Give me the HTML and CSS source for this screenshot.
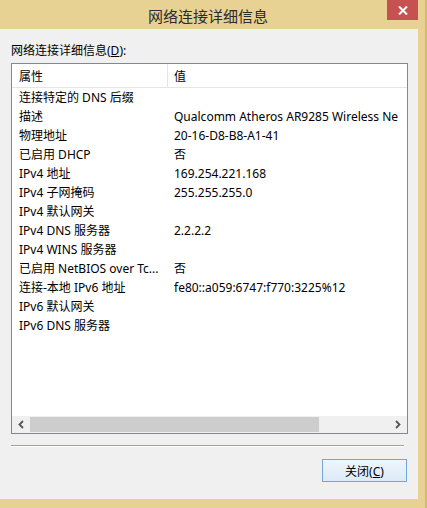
FILE: index.html
```html
<!DOCTYPE html>
<html>
<head>
	<meta charset="UTF-8">
	<title>网络连接详细信息</title>
	<link rel="stylesheet" href="styles.css">
</head>
<body>
	<div class="window">
		<div class="titlebar">
			<span class="title">网络连接详细信息</span>
			<span class="close">
				<svg width="10" height="9" viewBox="0 0 10 9"><path d="M1 0.5 L9 8.5 M9 0.5 L1 8.5" stroke="#fff" stroke-width="2"/></svg>
			</span>
		</div>
		<div class="client">
			<p class="label">网络连接详细信息(<u>D</u>):</p>
			<div class="listbox">
				<div class="header">
					<span class="col1">属性</span>
					<span class="col2">值</span>
				</div>
				<div class="rows">
					<div class="row"><span class="col1">连接特定的 DNS 后缀</span><span class="col2"></span></div>
					<div class="row"><span class="col1">描述</span><span class="col2">Qualcomm Atheros AR9285 Wireless Ne</span></div>
					<div class="row"><span class="col1">物理地址</span><span class="col2">20-16-D8-B8-A1-41</span></div>
					<div class="row"><span class="col1">已启用 DHCP</span><span class="col2">否</span></div>
					<div class="row"><span class="col1">IPv4 地址</span><span class="col2">169.254.221.168</span></div>
					<div class="row"><span class="col1">IPv4 子网掩码</span><span class="col2">255.255.255.0</span></div>
					<div class="row"><span class="col1">IPv4 默认网关</span><span class="col2"></span></div>
					<div class="row"><span class="col1">IPv4 DNS 服务器</span><span class="col2">2.2.2.2</span></div>
					<div class="row"><span class="col1">IPv4 WINS 服务器</span><span class="col2"></span></div>
					<div class="row"><span class="col1">已启用 NetBIOS over Tc...</span><span class="col2">否</span></div>
					<div class="row"><span class="col1">连接-本地 IPv6 地址</span><span class="col2">fe80::a059:6747:f770:3225%12</span></div>
					<div class="row"><span class="col1">IPv6 默认网关</span><span class="col2"></span></div>
					<div class="row"><span class="col1">IPv6 DNS 服务器</span><span class="col2"></span></div>
				</div>
				<div class="hscroll">
					<span class="arrow">
						<svg width="8" height="9" viewBox="0 0 8 9"><path d="M6 1 L2.5 4.5 L6 8" fill="none" stroke="#555" stroke-width="1.8"/></svg>
					</span>
					<span class="track"><span class="thumb"></span></span>
					<span class="arrow">
						<svg width="8" height="9" viewBox="0 0 8 9"><path d="M2 1 L5.5 4.5 L2 8" fill="none" stroke="#555" stroke-width="1.8"/></svg>
					</span>
				</div>
			</div>
			<div class="separator"></div>
			<div class="buttons">
				<button>关闭(<u>C</u>)</button>
			</div>
		</div>
	</div>
</body>
</html>
```

FILE: styles.css
```css
*{margin: 0;padding: 0;box-sizing: border-box;}
body{width: 427px;height: 508px;overflow: hidden;font-family: "Noto Sans", "Noto Sans CJK SC", sans-serif;font-size: 12px;color: #000;}
.window{width: 427px;height: 508px;display: flex;flex-direction: column;background: #e8d293;border-right: 2px solid #d4bb72;}
.titlebar{height: 29px;position: relative;display: flex;justify-content: center;align-items: center;padding-right: 9px;}
.title{font-size: 15px;color: #2b2b2b;padding-top: 1px;}
.close{position: absolute;right: 7px;top: 0;width: 31px;height: 20px;background: #c75050;display: flex;align-items: center;justify-content: center;}
.client{flex: 1;margin: 0 7px 9px 0;background: #f0f0f0;padding: 14px 11px 0 11px;display: flex;flex-direction: column;}
.label{line-height: 16px;margin-bottom: 4px;}
.listbox{width: 397px;height: 371px;border: 1px solid #828790;background: #fff;display: flex;flex-direction: column;overflow: hidden;}
.header{height: 24px;border-bottom: 1px solid #e5e5e5;display: flex;align-items: center;}
.header .col1{border-right: 1px solid #e5e5e5;height: 100%;display: flex;align-items: center;}
.col1{width: 156px;padding-left: 7px;white-space: nowrap;overflow: hidden;flex: none;}
.col2{padding-left: 6px;white-space: nowrap;overflow: hidden;flex: 1;}
.rows{flex: 1;overflow: hidden;}
.row{height: 19px;line-height: 19px;display: flex;}
.hscroll{height: 17px;background: #f0f0f0;display: flex;align-items: center;}
.arrow{width: 18px;height: 17px;display: flex;align-items: center;justify-content: center;flex: none;}
.track{flex: 1;height: 15px;}
.thumb{display: block;width: 289px;height: 15px;background: #cdcdcd;}
.separator{width: 393px;height: 2px;margin-top: 11px;border-top: 1px solid #a0a0a0;border-bottom: 1px solid #fff;}
.buttons{display: flex;justify-content: flex-end;margin-top: 12px;}
.buttons button{width: 85px;height: 23px;border: 1px solid #6fa7de;background: linear-gradient(#eef5fc, #dcebf9);font-family: "Noto Sans", "Noto Sans CJK SC", sans-serif;font-size: 12px;color: #000;}
```
